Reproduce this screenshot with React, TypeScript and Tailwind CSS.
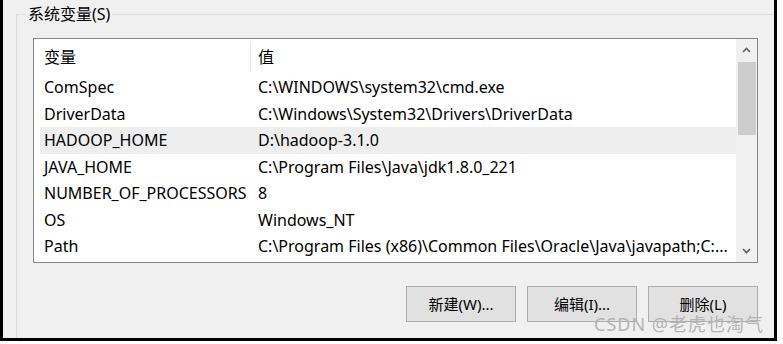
import React from 'react';

const rows: [string, string][] = [
  ['ComSpec', 'C:\\WINDOWS\\system32\\cmd.exe'],
  ['DriverData', 'C:\\Windows\\System32\\Drivers\\DriverData'],
  ['HADOOP_HOME', 'D:\\hadoop-3.1.0'],
  ['JAVA_HOME', 'C:\\Program Files\\Java\\jdk1.8.0_221'],
  ['NUMBER_OF_PROCESSORS', '8'],
  ['OS', 'Windows_NT'],
  ['Path', 'C:\\Program Files (x86)\\Common Files\\Oracle\\Java\\javapath;C:...'],
];

const font = { fontFamily: '"Noto Sans", "Noto Sans CJK SC", sans-serif' };

function Button({ label }: { label: string }) {
  return (
    <button className="w-[110px] h-[36px] bg-[#e1e1e1] border border-[#adadad] text-[15px] text-black">
      {label}
    </button>
  );
}

export default function App() {
  return (
    <div className="w-[783px] h-[344px] bg-white overflow-hidden" style={font}>
      <div className="relative w-[777px] h-[341px] pt-[14px] bg-[#f0f0f0] border-l-[3px] border-r-[3px] border-b-[3px] border-black">
        <div className="absolute left-[23px] top-[3px] px-[2px] bg-[#f0f0f0] text-[16px] leading-[22px] text-black">
          系统变量(S)
        </div>

        <div className="ml-[13px] h-[324px] border-l border-t border-[#dcdcdc] flex flex-col">
          <div className="ml-[16px] mt-[23px] w-[725px] h-[225px] bg-white border border-[#828790] flex">
            <div className="flex-1 pl-[6px] pt-[1px] flex flex-col">
              <div className="h-[34px] flex items-center text-[16px]">
                <div className="w-[211px] pl-[4px] h-[29px] flex items-center border-r border-[#e5e5e5]">变量</div>
                <div className="pl-[7px]">值</div>
              </div>
              {rows.map(([k, v], i) => (
                <div
                  key={k}
                  className={`h-[26.5px] flex items-center text-[16px] whitespace-nowrap ${i === 2 ? 'bg-[#eeeeee]' : ''}`}
                >
                  <div className="w-[218px] pl-[4px]">{k}</div>
                  <div>{v}</div>
                </div>
              ))}
            </div>
            <div className="w-[21px] bg-[#f0f0f0] flex flex-col items-center">
              <div className="h-[22px] flex items-center justify-center">
                <svg width="9" height="6" viewBox="0 0 9 6">
                  <path d="M1 5 L4.5 1.5 L8 5" fill="none" stroke="#606060" strokeWidth="1.6" />
                </svg>
              </div>
              <div className="w-[18px] h-[73px] mt-[1px] bg-[#cdcdcd]" />
              <div className="flex-1" />
              <div className="h-[22px] flex items-center justify-center">
                <svg width="9" height="6" viewBox="0 0 9 6">
                  <path d="M1 1 L4.5 4.5 L8 1" fill="none" stroke="#606060" strokeWidth="1.6" />
                </svg>
              </div>
            </div>
          </div>

          <div className="mt-[23px] ml-[389px] flex gap-[11px]">
            <Button label="新建(W)..." />
            <Button label="编辑(I)..." />
            <Button label="删除(L)" />
          </div>
        </div>

        <div className="absolute left-[591px] top-[313px] text-[18px] leading-[22px] text-[#b4b4b4] tracking-[1px]">
          CSDN @老虎也淘气
        </div>
      </div>
    </div>
  );
}
